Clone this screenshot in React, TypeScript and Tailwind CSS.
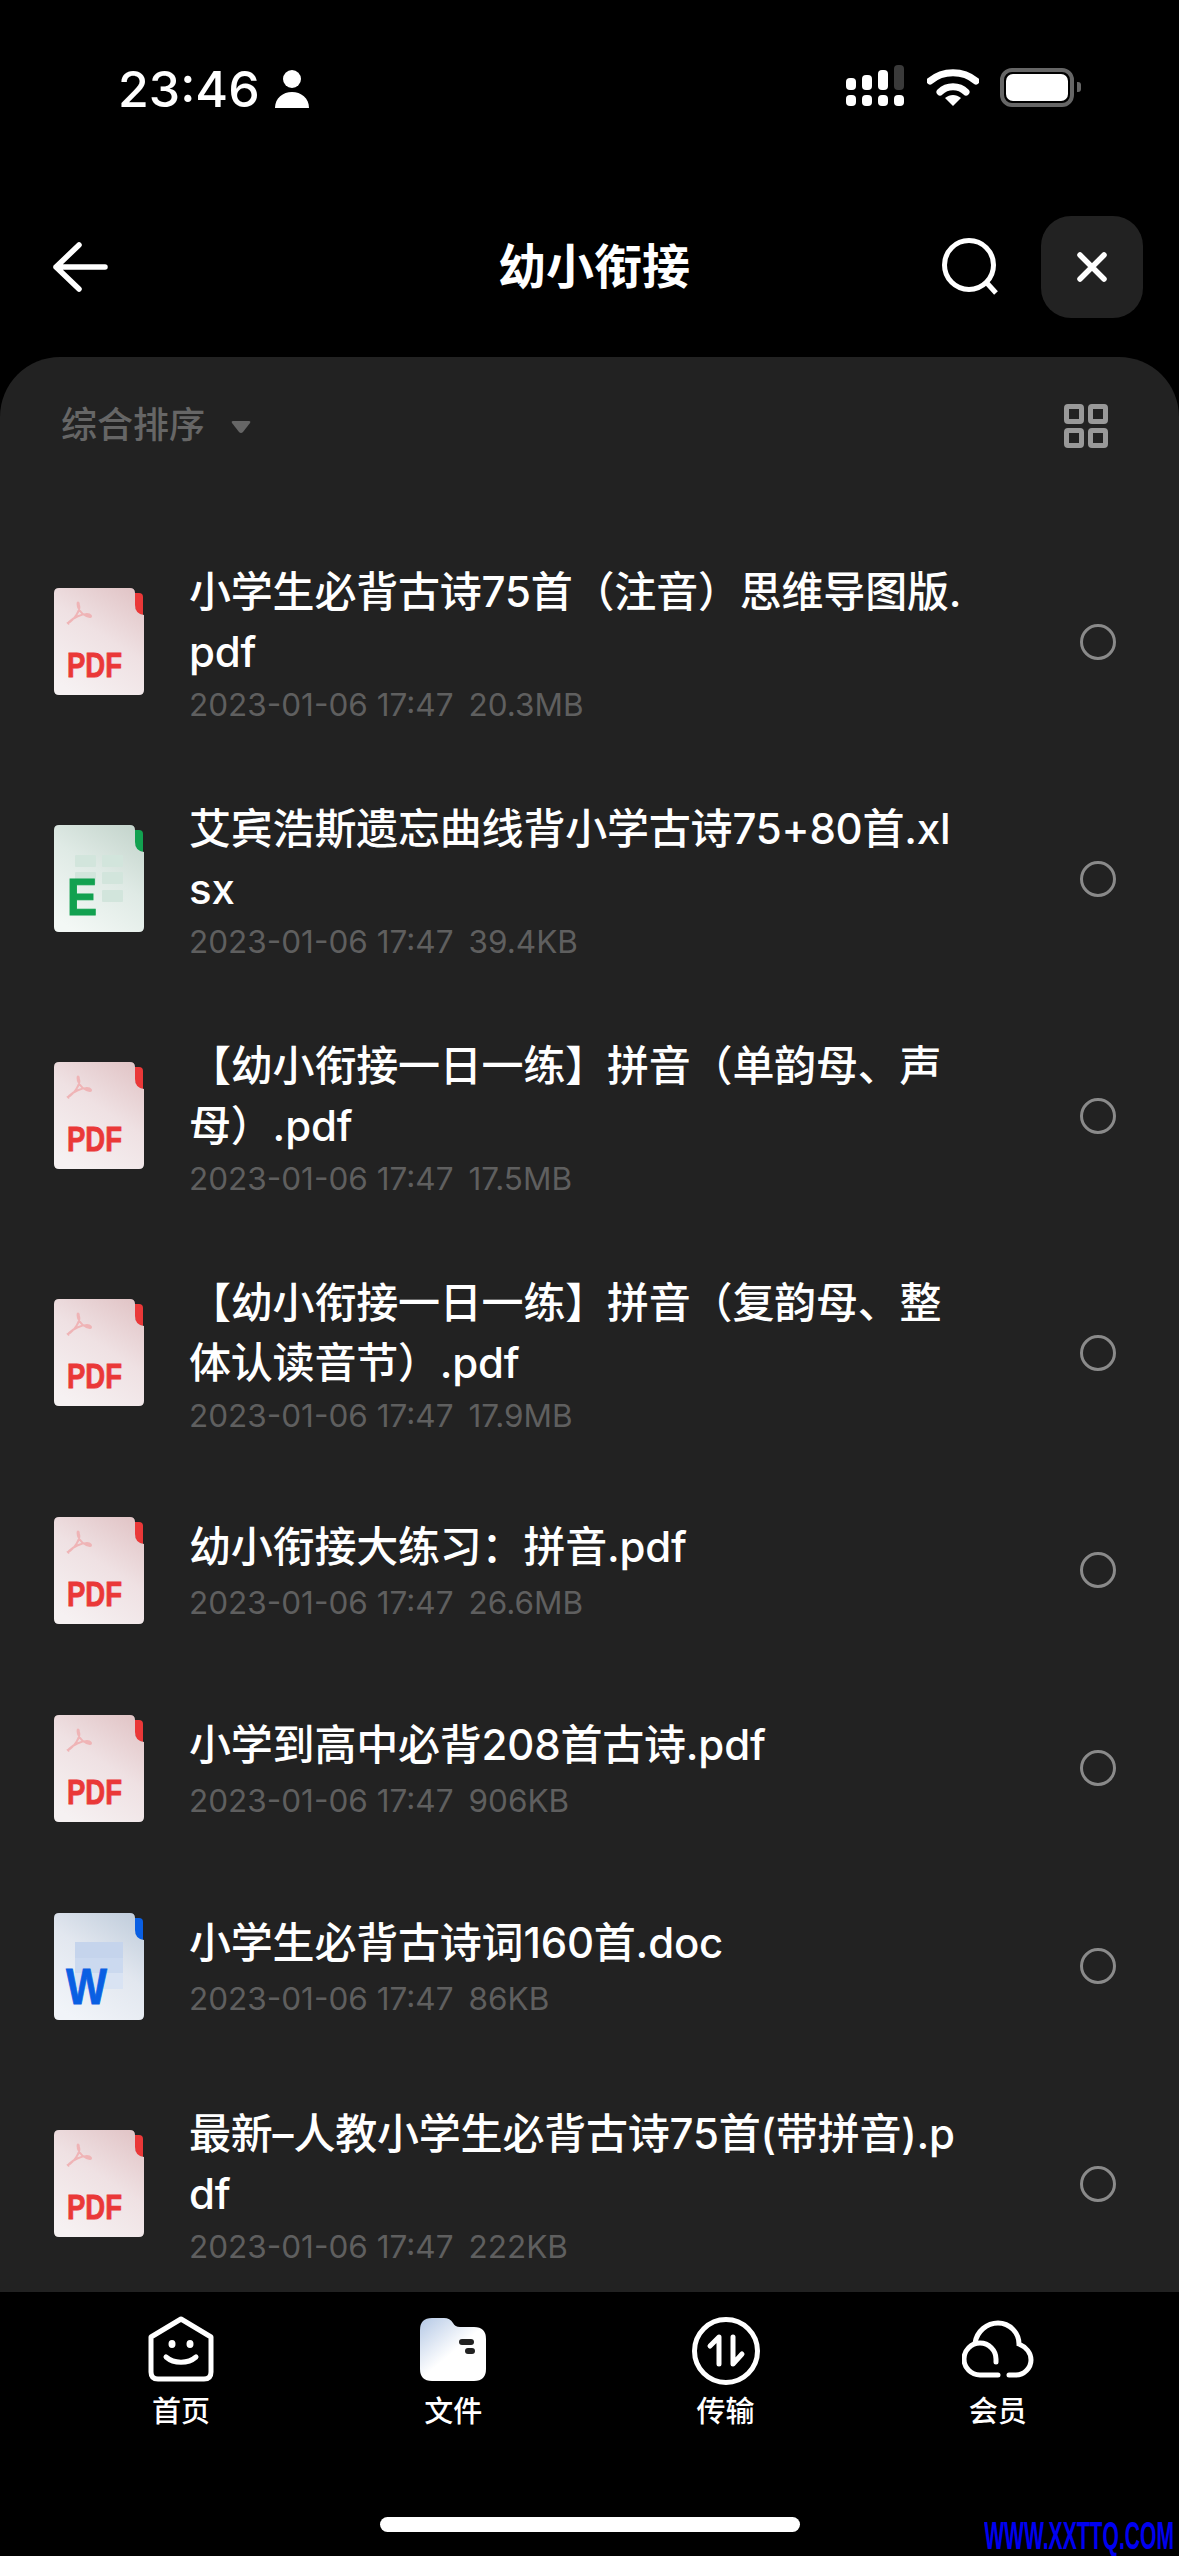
const files = [
  { type: "pdf", name: "小学生必背古诗75首（注音）思维导图版.pdf", size: "20.3MB", two: true },
  { type: "xls", name: "艾宾浩斯遗忘曲线背小学古诗75+80首.xlsx", size: "39.4KB", two: true },
  { type: "pdf", name: "【幼小衔接一日一练】拼音（单韵母、声母）.pdf", size: "17.5MB", two: true },
  { type: "pdf", name: "【幼小衔接一日一练】拼音（复韵母、整体认读音节）.pdf", size: "17.9MB", two: true },
  { type: "pdf", name: "幼小衔接大练习：拼音.pdf", size: "26.6MB", two: false },
  { type: "pdf", name: "小学到高中必背208首古诗.pdf", size: "906KB", two: false },
  { type: "doc", name: "小学生必背古诗词160首.doc", size: "86KB", two: false },
  { type: "pdf", name: "最新–人教小学生必背古诗75首(带拼音).pdf", size: "222KB", two: true },
];

const palette: Record<string, { from: string; mid: string; to: string; accent: string }> = {
  pdf: { from: "#e2c6c8", mid: "#efe1e3", to: "#f6f1f2", accent: "#ea3838" },
  xls: { from: "#c6d6ce", mid: "#dfeae5", to: "#f3f8f5", accent: "#12a150" },
  doc: { from: "#c3cfdd", mid: "#e2e7ef", to: "#f1f4f9", accent: "#0a5fe3" },
};

function FileIcon({ type }: { type: string }) {
  const c = palette[type];
  const id = "grad-" + type;
  return (
    <svg width="90" height="107" viewBox="0 0 90 107" className="shrink-0">
      <defs>
        <linearGradient id={id} x1="0.8" y1="0" x2="0.25" y2="1">
          <stop offset="0" stopColor={c.from} />
          <stop offset="0.45" stopColor={c.mid} />
          <stop offset="1" stopColor={c.to} />
        </linearGradient>
      </defs>
      <path d="M81 5h4q4 0 4 4v18q-8 0-8-8z" fill={c.accent} />
      <path
        d="M5 0H76Q81 0 81 5V17Q81 26 90 27V102Q90 107 85 107H5Q0 107 0 102V5Q0 0 5 0Z"
        fill={`url(#${id})`}
      />
      {type === "pdf" && (
        <>
          <path
            d="M14 35C20 32 27 22 25 17C24 12 23 15 24 19C26 25 31 28 36 29C38 29 37 26 33 26C27 26 19 30 15 34C14 36 15 36 14 35Z"
            fill="none"
            stroke="#efb4b6"
            strokeWidth="2"
          />
          <text
            x="13"
            y="89"
            fontFamily="'Liberation Sans', sans-serif"
            fontWeight="700"
            fontSize="35"
            textLength="55"
            lengthAdjust="spacingAndGlyphs"
            fill={c.accent}
            stroke={c.accent}
            strokeWidth="0.8"
          >
            PDF
          </text>
        </>
      )}
      {type === "xls" && (
        <>
          <rect x="21" y="30" width="21" height="12" rx="1" fill="#d2e5dc" />
          <rect x="48" y="30" width="21" height="12" rx="1" fill="#d2e5dc" />
          <rect x="21" y="47" width="21" height="12" rx="1" fill="#d2e5dc" />
          <rect x="48" y="47" width="21" height="12" rx="1" fill="#d2e5dc" />
          <rect x="48" y="65" width="21" height="12" rx="1" fill="#d2e5dc" />
          <text
            x="13"
            y="90"
            fontFamily="'Liberation Sans', sans-serif"
            fontWeight="700"
            fontSize="52"
            textLength="30"
            lengthAdjust="spacingAndGlyphs"
            fill={c.accent}
            stroke={c.accent}
            strokeWidth="1"
          >
            E
          </text>
        </>
      )}
      {type === "doc" && (
        <>
          <rect x="21" y="29" width="48" height="16" fill="#c5d4ec" />
          <rect x="21" y="45" width="48" height="15" fill="#cbd9ef" />
          <rect x="21" y="60" width="48" height="16" fill="#d9e3f3" />
          <text
            x="12"
            y="91"
            fontFamily="'Liberation Sans', sans-serif"
            fontWeight="700"
            fontSize="50"
            textLength="41"
            lengthAdjust="spacingAndGlyphs"
            fill={c.accent}
            stroke={c.accent}
            strokeWidth="0.8"
          >
            W
          </text>
        </>
      )}
    </svg>
  );
}

function StatusIcons() {
  return (
    <div className="flex items-center">
      <svg width="60" height="44" viewBox="0 0 60 44" className="mr-[22px]">
        <rect x="1" y="13" width="10" height="12" rx="4" fill="#fff" />
        <rect x="17" y="10" width="10" height="15" rx="4" fill="#fff" />
        <rect x="33" y="5" width="10" height="20" rx="4" fill="#fff" />
        <rect x="49" y="0" width="10" height="25" rx="4" fill="#3a3a3a" />
        <rect x="1" y="30" width="10" height="11" rx="4" fill="#fff" />
        <rect x="17" y="30" width="10" height="11" rx="4" fill="#fff" />
        <rect x="33" y="30" width="10" height="11" rx="4" fill="#fff" />
        <rect x="49" y="30" width="10" height="11" rx="4" fill="#fff" />
      </svg>
      <svg width="52" height="38" viewBox="0 0 52 38" className="mr-[21px]">
        <path d="M3 13C16 2 36 2 49 13" fill="none" stroke="#fff" strokeWidth="7" strokeLinecap="round" />
        <path d="M13 24C20 17 32 17 39 24" fill="none" stroke="#fff" strokeWidth="7" strokeLinecap="round" />
        <path d="M18 30C23 26 29 26 34 30L26 38Z" fill="#fff" />
      </svg>
      <div className="w-[74px] h-[39px] rounded-[12px] border-[4px] border-[#666666] p-[2px]">
        <div className="w-full h-full rounded-[7px] bg-white" />
      </div>
      <div className="w-[4px] h-[10px] ml-[3px] rounded-r-[3px] bg-[#666666]" />
    </div>
  );
}

function NavItem({ label, children }: { label: string; children: React.ReactNode }) {
  return (
    <div className="flex flex-col items-center">
      <div className="h-[72px] flex items-center justify-center">{children}</div>
      <span className="mt-[10px] text-[29px] leading-[34px] font-medium text-white">{label}</span>
    </div>
  );
}

export default function App() {
  return (
    <div className="relative w-[1179px] h-[2556px] bg-black flex flex-col overflow-hidden font-['Inter','Noto_Sans_CJK_SC',sans-serif]">
      {/* status bar */}
      <div className="h-[216px] flex justify-between items-start pt-[65px] pl-[118px] pr-[98px]">
        <div className="flex items-center">
          <span className="text-[50px] leading-[48px] font-medium text-white">23:46</span>
          <svg width="34" height="38" viewBox="0 0 34 38" className="ml-[15px]">
            <circle cx="17" cy="9" r="9" fill="#fff" />
            <path d="M0 38C0 28 8 22 17 22C26 22 34 28 34 38Z" fill="#fff" />
          </svg>
        </div>
        <StatusIcons />
      </div>

      {/* header */}
      <div className="h-[102px] grid grid-cols-[1fr_auto_1fr] items-center pl-[45px] pr-[36px]">
        <svg width="66" height="52" viewBox="0 0 66 52">
          <path
            d="M60 26H11M34 4L11 26L34 48"
            fill="none"
            stroke="#fff"
            strokeWidth="5.5"
            strokeLinecap="round"
            strokeLinejoin="round"
          />
        </svg>
        <h1 className="text-[48px] leading-[60px] font-bold text-white">幼小衔接</h1>
        <div className="flex items-center justify-end gap-[41px]">
          <svg width="58" height="58" viewBox="0 0 58 58">
            <circle cx="27" cy="27" r="24.5" fill="none" stroke="#fff" strokeWidth="5" />
            <path d="M44 44L54 55" stroke="#fff" strokeWidth="5" />
          </svg>
          <div className="w-[102px] h-[102px] rounded-[30px] bg-[#222222] flex items-center justify-center">
            <svg width="30" height="30" viewBox="0 0 30 30">
              <path d="M3 3L27 27M27 3L3 27" stroke="#fff" strokeWidth="5.5" strokeLinecap="round" />
            </svg>
          </div>
        </div>
      </div>

      {/* panel */}
      <div className="mt-[39px] h-[1935px] rounded-t-[60px] bg-[#222222] overflow-hidden">
        <div className="h-[166px] flex justify-between items-start pt-[46px] pl-[61px] pr-[71px]">
          <div className="flex items-center">
            <span className="text-[36px] leading-[44px] font-medium text-[#666666]">综合排序</span>
            <svg width="20" height="14" viewBox="0 0 20 14" className="ml-[26px] mt-[3px]">
              <path d="M2 1H18Q20 1 19 3L12 12Q10 14 8 12L1 3Q0 1 2 1Z" fill="#666666" />
            </svg>
          </div>
          <svg width="44" height="44" viewBox="0 0 44 44" className="mt-[1px]">
            <rect x="2.5" y="2.5" width="15" height="15" rx="1.5" fill="none" stroke="#999999" strokeWidth="5" />
            <rect x="26.5" y="2.5" width="15" height="15" rx="1.5" fill="none" stroke="#999999" strokeWidth="5" />
            <rect x="2.5" y="26.5" width="15" height="15" rx="1.5" fill="none" stroke="#999999" strokeWidth="5" />
            <rect x="26.5" y="26.5" width="15" height="15" rx="1.5" fill="none" stroke="#999999" strokeWidth="5" />
          </svg>
        </div>

        {files.map((f) => (
          <div
            key={f.name}
            className={`flex items-center pl-[54px] pr-[63px] ${f.two ? "h-[237px]" : "h-[198px]"}`}
          >
            <FileIcon type={f.type} />
            <div className={`ml-[45px] w-[780px] ${f.two ? "mt-[2px]" : "-mt-[3px]"}`}>
              <div className="text-[42px] leading-[60px] font-medium tracking-[-0.2px] text-white break-all">
                {f.name}
              </div>
              <div
                className={`text-[31.5px] leading-[36px] text-[#5f5f5f] flex gap-[15px] ${f.two ? "mt-[5px]" : "mt-[8px]"}`}
              >
                <span>2023-01-06 17:47</span>
                <span>{f.size}</span>
              </div>
            </div>
            <div className="ml-auto w-[36px] h-[36px] rounded-full border-[3px] border-[#8a8a8a]" />
          </div>
        ))}
      </div>

      {/* bottom nav */}
      <div className="grid grid-cols-4 px-[45px] pt-[21px]">
        <NavItem label="首页">
          <svg width="66" height="66" viewBox="0 0 66 66">
            <path
              d="M33 3L63 21V56Q63 63 56 63H10Q3 63 3 56V21Z"
              fill="none"
              stroke="#fff"
              strokeWidth="5"
              strokeLinejoin="round"
            />
            <ellipse cx="24" cy="28" rx="3.5" ry="4" fill="#fff" />
            <ellipse cx="42" cy="28" rx="3.5" ry="4" fill="#fff" />
            <path d="M18 41C26 48 40 48 48 41" fill="none" stroke="#fff" strokeWidth="5" strokeLinecap="round" />
          </svg>
        </NavItem>
        <NavItem label="文件">
          <svg width="66" height="63" viewBox="0 0 66 63">
            <defs>
              <linearGradient id="folder" x1="0" y1="0" x2="0.75" y2="0.85">
                <stop offset="0" stopColor="#b4c8e5" />
                <stop offset="0.65" stopColor="#ffffff" />
              </linearGradient>
            </defs>
            <path
              d="M12 0H24Q30 0 33 5Q35 9 40 9H54Q66 9 66 21V51Q66 63 54 63H12Q0 63 0 51V12Q0 0 12 0Z"
              fill="url(#folder)"
            />
            <rect x="39" y="21" width="15" height="6" rx="3" fill="#222222" />
            <rect x="45" y="30" width="10" height="6" rx="3" fill="#222222" />
          </svg>
        </NavItem>
        <NavItem label="传输">
          <svg width="68" height="68" viewBox="0 0 68 68" className="mt-[3px]">
            <circle cx="34" cy="34" r="31.5" fill="none" stroke="#fff" strokeWidth="5" />
            <path
              d="M27 47V20L18 29M41 20V47L50 37"
              fill="none"
              stroke="#fff"
              strokeWidth="5"
              strokeLinecap="round"
              strokeLinejoin="round"
            />
          </svg>
        </NavItem>
        <NavItem label="会员">
          <svg width="72" height="58" viewBox="0 0 72 58">
            <path
              d="M36 55H18A16 16 0 1 1 34 39V42M13 23C15 11 25 3 36 3C48 3 57 13 57 24C64 27 69 33 69 40C69 48 62 55 54 55H47"
              fill="none"
              stroke="#fff"
              strokeWidth="5"
              strokeLinecap="round"
            />
          </svg>
        </NavItem>
      </div>

      {/* home indicator */}
      <div className="absolute left-[380px] top-[2517px] w-[420px] h-[15px] rounded-full bg-white" />
      {/* watermark */}
      <div className="absolute right-[5px] top-[2516px] origin-right scale-x-[0.555] whitespace-nowrap font-['Liberation_Sans',sans-serif] font-bold text-[38px] leading-[40px] text-[#0000f0]">
        WWW.XXTTQ.COM
      </div>
    </div>
  );
}
